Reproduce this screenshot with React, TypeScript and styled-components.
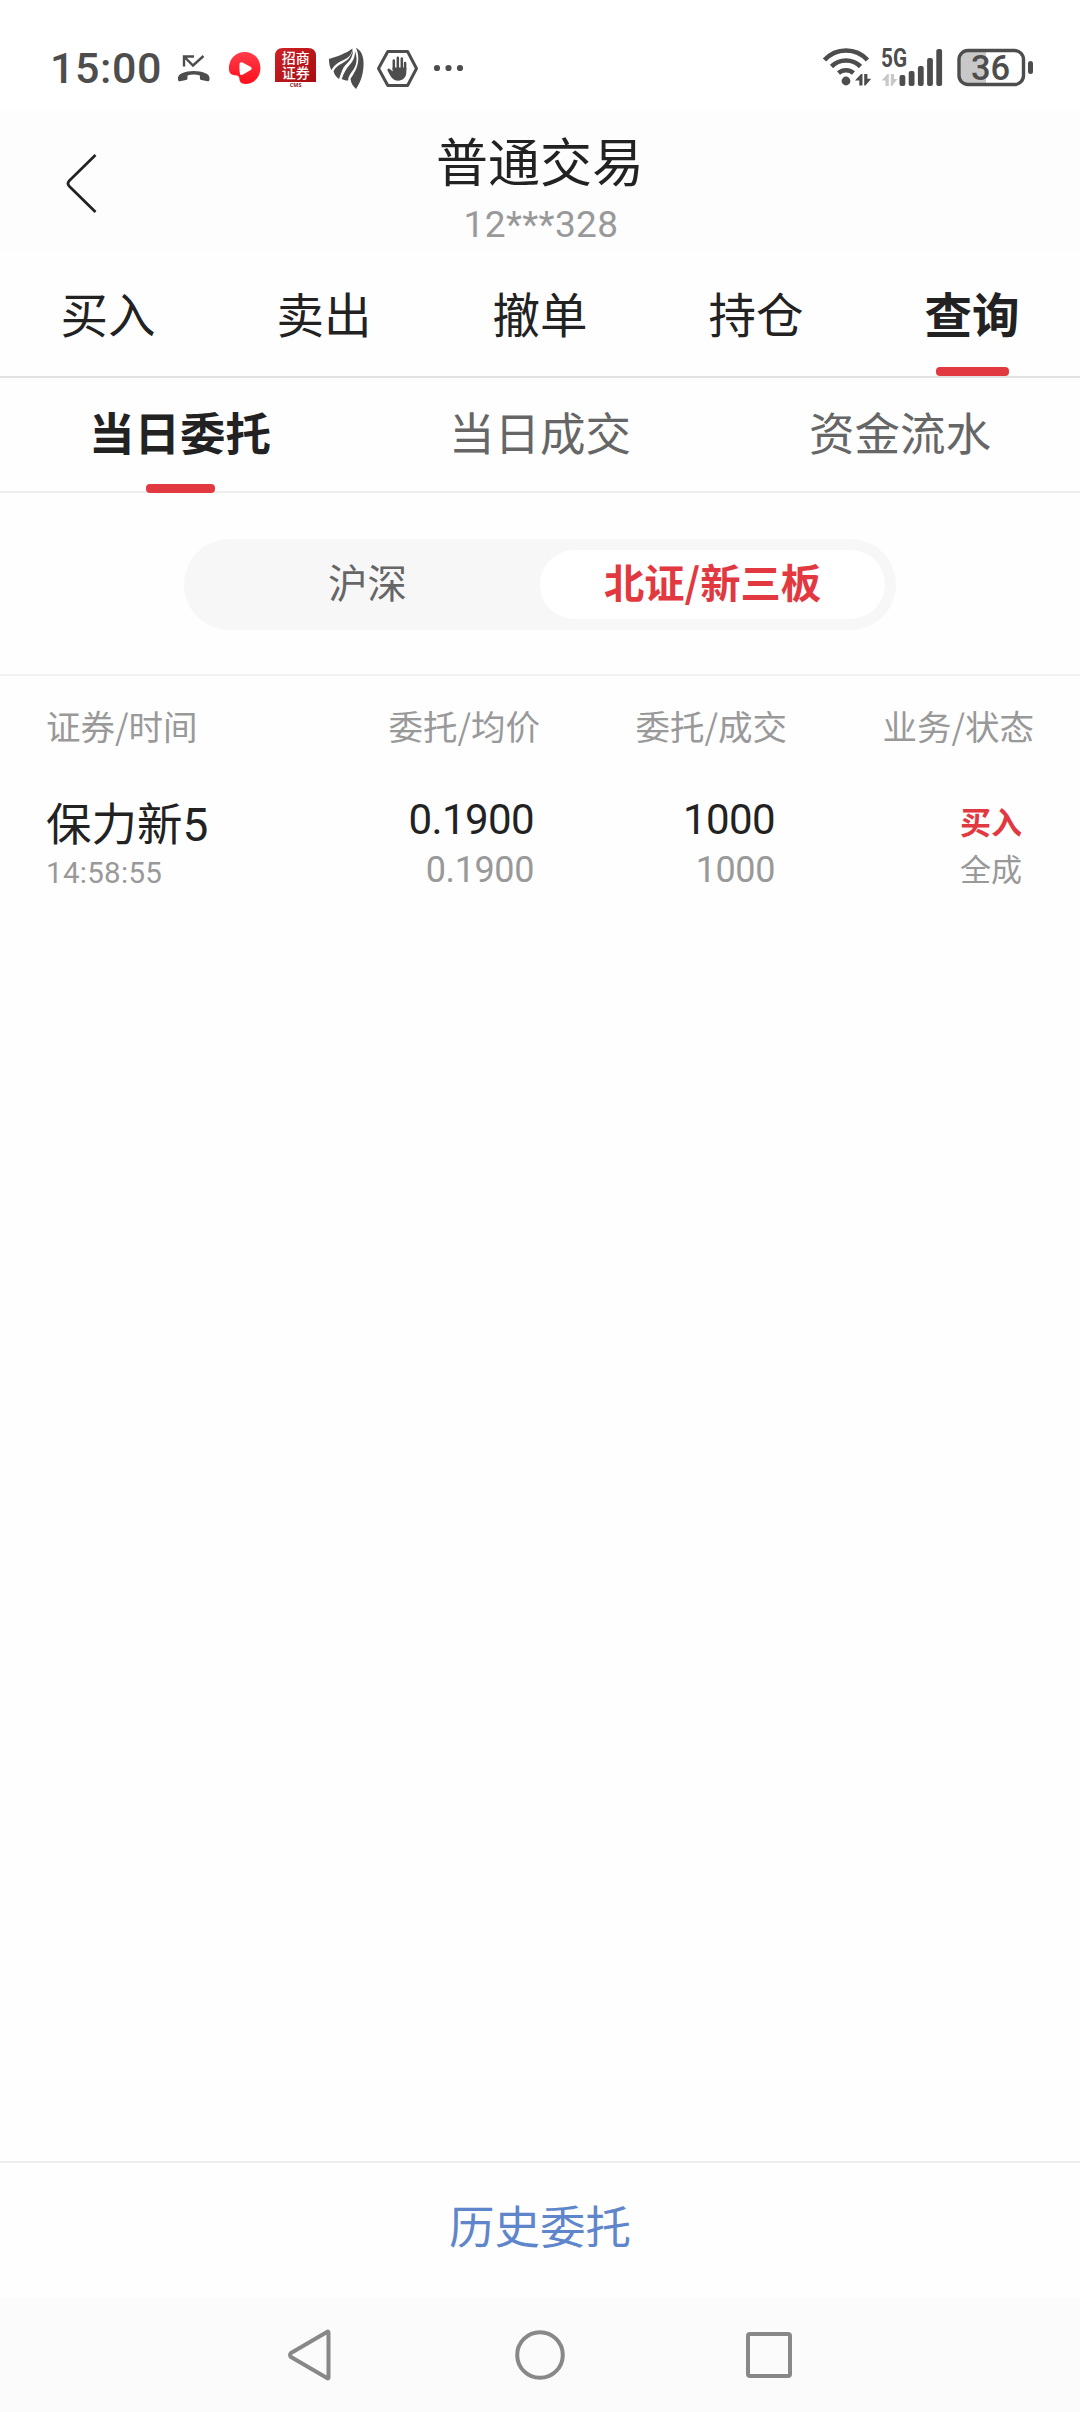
import React from "react";
import styled, { createGlobalStyle } from "styled-components";

const CJK = `"Noto Sans CJK SC", "Noto Sans", sans-serif`;
const NUM = `Roboto, "Noto Sans CJK SC", sans-serif`;
const RED = "#e1393f";
const INK = "#222222";
const MID = "#666666";
const GREY = "#999999";
const STATUS = "#4d4d4d";

const GlobalStyle = createGlobalStyle`
  body { margin: 0; background: #fefefe; }
  * { box-sizing: border-box; }
  button { border: 0; padding: 0; background: none; font: inherit; color: inherit; }
`;

const Screen = styled.div`
  width: 1080px;
  height: 2412px;
  display: flex;
  flex-direction: column;
  background: #fefefe;
  color: ${INK};
  font-family: ${CJK};
  overflow: hidden;
`;

/* ---------- status bar ---------- */
const StatusBar = styled.div`
  height: 110px;
  flex: none;
  display: flex;
  align-items: flex-start;
  justify-content: space-between;
  padding: 44px 45px 0 50px;
  background: #ffffff;
`;
const StatusGroup = styled.div`
  display: flex;
  align-items: center;
  height: 48px;
`;
const Clock = styled.div`
  width: 121px;
  font: 500 43px/48px ${NUM};
  letter-spacing: 0.6px;
  color: ${STATUS};
  white-space: nowrap;
`;
const Icon = styled.svg<{ $gap?: number }>`
  display: block;
  flex: none;
  overflow: visible;
  margin-left: ${(p) => p.$gap ?? 0}px;
`;

/* ---------- title ---------- */
const Header = styled.header`
  height: 142px;
  flex: none;
  display: grid;
  grid-template-columns: 160px 1fr 160px;
  background: #fdfdfd;
`;
const BackButton = styled.button`
  display: flex;
  align-items: flex-start;
  padding: 43px 0 0 64px;
`;
const Titles = styled.div`
  display: flex;
  flex-direction: column;
  align-items: center;
  padding-top: 19px;
`;
const Title = styled.h1`
  margin: 0;
  font-size: 52px;
  font-weight: 400;
  line-height: 62px;
`;
const Account = styled.div`
  margin-top: 14px;
  padding-left: 2px;
  font: 400 37px/40px ${NUM};
  letter-spacing: 0.4px;
  color: ${GREY};
`;

/* ---------- tabs ---------- */
const Tabs = styled.nav<{ $height: number; $line: string }>`
  height: ${(p) => p.$height}px;
  flex: none;
  display: flex;
  border-bottom: 2px solid ${(p) => p.$line};
`;
const Tab = styled.button<{ $size: number; $active?: boolean; $color: string; $top: number }>`
  flex: 1;
  display: flex;
  flex-direction: column;
  align-items: center;
  justify-content: space-between;
  padding-top: ${(p) => p.$top}px;
  font-size: ${(p) => p.$size}px;
  font-weight: ${(p) => (p.$active ? 700 : 400)};
  line-height: 60px;
  color: ${(p) => (p.$active ? INK : p.$color)};
`;
const Indicator = styled.span<{ $width: number; $drop?: number }>`
  width: ${(p) => p.$width}px;
  height: 9px;
  margin-bottom: ${(p) => -(p.$drop ?? 0)}px;
  border-radius: 4px;
  background: ${RED};
`;

/* ---------- market switch ---------- */
const SwitchArea = styled.div`
  height: 183px;
  flex: none;
  display: flex;
  justify-content: center;
  align-items: flex-start;
  padding-top: 46px;
  border-bottom: 2px solid #f1f1f1;
`;
const Segment = styled.div`
  width: 712px;
  height: 91px;
  display: flex;
  padding: 11px;
  border-radius: 46px;
  background: #f7f7f7;
`;
const SegmentItem = styled.button<{ $active?: boolean }>`
  flex: 1;
  height: 69px;
  border-radius: 35px;
  font-size: ${(p) => (p.$active ? 40.3 : 39.5)}px;
  line-height: 60px;
  padding-bottom: 8px;
  font-weight: ${(p) => (p.$active ? 700 : 400)};
  color: ${(p) => (p.$active ? RED : MID)};
  background: ${(p) => (p.$active ? "#ffffff" : "transparent")};
`;

/* ---------- order table ---------- */
const Orders = styled.main`
  flex: 1;
  display: flex;
  flex-direction: column;
  padding: 0 46px;
`;
const Row = styled.div`
  display: grid;
  grid-template-columns: 246px 248px 247px 247px;
`;
const HeadRow = styled(Row)`
  padding-top: 24px;
  font-size: 34.500px;
  line-height: 50px;
  color: ${GREY};
`;
const HeadCell = styled.div<{ $left?: boolean }>`
  text-align: ${(p) => (p.$left ? "left" : "right")};
  white-space: nowrap;
`;
const OrderRow = styled(Row)`
  padding-top: 41px;
`;
const Cell = styled.div<{ $inset?: number; $left?: boolean }>`
  display: flex;
  flex-direction: column;
  align-items: ${(p) => (p.$left ? "flex-start" : "flex-end")};
  padding-right: ${(p) => p.$inset ?? 0}px;
  white-space: nowrap;
`;
const StockName = styled.div`
  font-size: 45.5px;
  line-height: 60px;
`;
const StockDigit = styled.span`
  font-family: ${NUM};
  font-size: 46px;
  line-height: 1;
`;
const Time = styled.div`
  margin-top: 4px;
  font: 400 29.5px/36px ${NUM};
  letter-spacing: 0.3px;
  color: ${GREY};
`;
const Value = styled.div`
  margin-top: 1px;
  font: 400 42px/56px ${NUM};
  letter-spacing: -0.6px;
`;
const SubValue = styled.div`
  margin-top: 2px;
  font: 400 36px/40px ${NUM};
  letter-spacing: -0.4px;
  color: ${GREY};
`;
const Side = styled.div`
  font-size: 31px;
  font-weight: 700;
  line-height: 60px;
  color: ${RED};
`;
const State = styled.div`
  font-size: 31px;
  line-height: 34px;
  color: ${GREY};
`;

/* ---------- footer ---------- */
const HistoryLink = styled.button`
  height: 137px;
  flex: none;
  border-top: 2px solid #eeeeee;
  padding-bottom: 13px;
  font-size: 45.5px;
  line-height: 60px;
  color: #5f86cb;
`;
const SystemNav = styled.nav`
  height: 114px;
  flex: none;
  display: flex;
  justify-content: center;
  gap: 177px;
  padding-top: 30px;
  background: #fbfbfb;
`;

const mainTabs = ["买入", "卖出", "撤单", "持仓", "查询"];
const queryTabs = ["当日委托", "当日成交", "资金流水"];

const MissedCallIcon = () => (
  <Icon $gap={5} width="35" height="32" viewBox="176 52 35 32" fill="none">
    <path d="M184 66.500V56.500H194M184.500 57L193 65.500L203.500 56" stroke={STATUS} strokeWidth="2.400" />
    <path d="M178 79.500c-.5-3 1-5 4-6.300c6.500-2.900 17-2.900 23.500 0c3 1.300 4.500 3.300 4 6.300c-.1 1.500-.9 1.900-2 1.700l-6-1.100c-1.200-.2-1.600-.8-1.600-2v-2.600c-4-1.200-8.400-1.200-12.400 0v2.600c0 1.200-.4 1.800-1.600 2l-6 1.100c-1.100.2-1.800-.2-1.900-1.700z" fill={STATUS} />
  </Icon>
);
const VideoIcon = () => (
  <Icon $gap={17} width="34" height="36" viewBox="228 50 34 36">
    <defs>
      <linearGradient id="video" x1="0" y1="0" x2="0" y2="1">
        <stop offset="0" stopColor="#ff3d4a" />
        <stop offset="1" stopColor="#ff0d1b" />
      </linearGradient>
    </defs>
    <path d="M244.800 52C254 52 260.400 59 260.400 68C260.400 77 254 84 245.500 84C241.500 84 239.500 82 239.400 78.800C239.300 75.800 237.500 75.500 234.500 75.300C230.500 75 228.800 72.500 228.900 68C229.100 59 235.500 52 244.800 52Z" fill="url(#video)" />
    <path d="M239.500 64c.2-1.600 1.600-2.300 3-1.600l8 4.300c1.500 1 1.500 2.600.2 3.400l-7.600 4.500c-1.700 1-3 .4-3.200-1.200c-.5-3.200-.7-6.200-.4-9.400z" fill="#fff" />
  </Icon>
);
const BrokerIcon = () => (
  <Icon $gap={13} width="42" height="42" viewBox="275 47 42 42">
    <defs>
      <linearGradient id="broker" x1="0" y1="0" x2="1" y2="1">
        <stop offset="0" stopColor="#d02125" />
        <stop offset="1" stopColor="#a50d12" />
      </linearGradient>
    </defs>
    <path d="M283 48H308Q316 48 316 56V82H275V56Q275 48 283 48Z" fill="url(#broker)" />
    <text x="295.700" y="62.800" fontSize="14" fontWeight="500" fontFamily={CJK} fill="#fff" textAnchor="middle">招商</text>
    <text x="295.700" y="77.800" fontSize="14" fontWeight="500" fontFamily={CJK} fill="#fff" textAnchor="middle">证券</text>
    <text x="295.700" y="87.400" fontSize="5.500" fontWeight="700" fontFamily="Open Sans, sans-serif" fill="#8e2023" textAnchor="middle">CMS</text>
  </Icon>
);
const WingIcon = () => (
  <Icon $gap={11} width="38" height="44" viewBox="328 46 38 44" fill={STATUS}>
    <path d="M329 59C337 56.500 346 53.500 352.500 48.500C352 54 349 57.500 343.500 60C337.500 62.700 334.500 65 331.500 70C329.500 67 329 63 329 59Z" />
    <path d="M354 49.500C354 57 351 60.500 347 64.500C343 68.500 342.500 73 340 79C337.500 77.500 335.200 74.500 334.500 71C338.500 63.500 347.500 63 351 56.500C352.500 54 353.500 52 354 49.500Z" transform="translate(-1 0)" />
    <path d="M356 47.800C361.500 50.500 364 57 363.500 66C363 76 360 83 356 89C353 86 350.800 83 350.500 79C355 72 362 62 356 47.800Z" />
    <path d="M355 51C358 60 356.500 66 352 71.500C349.500 75 348 77.500 348.200 80.500C345.800 80.700 343.200 79.800 341.800 79C343.500 73 346.500 68.500 350 64.500C353.500 60.500 355 57 355 51Z" />
  </Icon>
);
const BlockIcon = () => (
  <Icon $gap={10} width="43" height="42" viewBox="376 47 43 42">
    <path d="M387.800 51.500H407.600L416.500 68.500L407.600 85.500H387.800L378.500 68.500Z" fill="none" stroke={STATUS} strokeWidth="3" strokeLinejoin="round" />
    <path d="M393.800 69V60.500M397.800 69V57.700M401.800 69V58.500M405.100 70V63" stroke={STATUS} strokeWidth="2.500" strokeLinecap="round" />
    <path d="M392.600 67.500H406.300V72.500C406.300 77.500 402.500 80.700 398 80.700C393 80.700 390.500 76.500 387.600 70.700C386.900 68.900 388.600 67.700 390 69L392.600 71.500Z" fill={STATUS} />
  </Icon>
);
const MoreIcon = () => (
  <Icon $gap={14} width="32" height="10" viewBox="433 62 32 10" fill={STATUS}>
    <circle cx="437" cy="67" r="3.100" />
    <circle cx="448.500" cy="67" r="3.100" />
    <circle cx="460" cy="67" r="3.100" />
  </Icon>
);
const WifiIcon = () => (
  <Icon width="50" height="42" viewBox="822 47 50 42" fill="none">
    <path d="M824.500 60A29 29 0 0 1 867.500 60M831.500 66.500A20.500 20.500 0 0 1 860.500 66.500M838.500 73A11.500 11.500 0 0 1 853.500 73" stroke={STATUS} strokeWidth="4.600" />
    <circle cx="846" cy="81" r="4.400" fill={STATUS} />
    <path d="M862.500 74V85.500H859.300V80.500H855L861 74ZM864.200 85.500V74H867.400V78.800H871.200L865.500 85.500Z" fill={STATUS} />
  </Icon>
);
const SignalIcon = () => (
  <Icon $gap={8} width="64" height="42" viewBox="880 47 64 42">
    <text x="881" y="66.800" fontFamily={NUM} fontSize="25" fontWeight="700" fill={STATUS} textLength="26" lengthAdjust="spacingAndGlyphs">5G</text>
    <path d="M888.800 74V86H885.500V80.500H881.500L887.500 74ZM890.800 86V74H894V79H897.500L892 86Z" fill="#c8c8c8" />
    {[75, 71, 66, 58, 49].map((y, i) => (
      <rect key={y} x={899.5 + i * 9.2} y={y} width="5.800" height={86 - y} rx="2" fill={STATUS} />
    ))}
  </Icon>
);
const BatteryIcon = () => (
  <Icon $gap={12} width="79" height="42" viewBox="956 47 79 42">
    <clipPath id="charge"><rect x="957" y="49" width="29" height="37" /></clipPath>
    <rect x="959" y="50.500" width="64.500" height="34" rx="9" fill="#c8c8c8" clipPath="url(#charge)" />
    <rect x="959" y="50.500" width="64.500" height="34" rx="9" fill="none" stroke={STATUS} strokeWidth="3.400" />
    <rect x="1028" y="61" width="5" height="13" rx="2.500" fill={STATUS} />
    <text x="990.500" y="79.500" textAnchor="middle" fontFamily={NUM} fontWeight="500" fontSize="34.500" fill={STATUS}>36</text>
  </Icon>
);

export default function App() {
  return (
    <>
      <GlobalStyle />
      <Screen>
        <StatusBar>
          <StatusGroup>
            <Clock>15:00</Clock>
            <MissedCallIcon />
            <VideoIcon />
            <BrokerIcon />
            <WingIcon />
            <BlockIcon />
            <MoreIcon />
          </StatusGroup>
          <StatusGroup>
            <WifiIcon />
            <SignalIcon />
            <BatteryIcon />
          </StatusGroup>
        </StatusBar>

        <Header>
          <BackButton aria-label="返回">
            <Icon width="34" height="62" viewBox="0 0 34 62" fill="none">
              <path d="M31.500 2L5.500 27.500Q2.500 30.500 5.500 33.500L31.500 59" stroke={INK} strokeWidth="2.700" />
            </Icon>
          </BackButton>
          <Titles>
            <Title>普通交易</Title>
            <Account>12***328</Account>
          </Titles>
        </Header>

        <Tabs $height={126} $line="#e2e2e2">
          {mainTabs.map((t, i) => (
            <Tab key={t} $size={47.5} $top={31} $color={INK} $active={i === 4}>
              {t}
              {i === 4 && <Indicator $width={73} />}
            </Tab>
          ))}
        </Tabs>
        <Tabs $height={115} $line="#eeeeee">
          {queryTabs.map((t, i) => (
            <Tab key={t} $size={45.5} $top={23} $color={MID} $active={i === 0}>
              {t}
              {i === 0 && <Indicator $width={69} $drop={2} />}
            </Tab>
          ))}
        </Tabs>

        <SwitchArea>
          <Segment>
            <SegmentItem>沪深</SegmentItem>
            <SegmentItem $active>北证/新三板</SegmentItem>
          </Segment>
        </SwitchArea>

        <Orders>
          <HeadRow>
            <HeadCell $left>证券/时间</HeadCell>
            <HeadCell>委托/均价</HeadCell>
            <HeadCell>委托/成交</HeadCell>
            <HeadCell>业务/状态</HeadCell>
          </HeadRow>
          <OrderRow>
            <Cell $left>
              <StockName>保力新<StockDigit>5</StockDigit></StockName>
              <Time>14:58:55</Time>
            </Cell>
            <Cell $inset={6}>
              <Value>0.1900</Value>
              <SubValue>0.1900</SubValue>
            </Cell>
            <Cell $inset={12}>
              <Value>1000</Value>
              <SubValue>1000</SubValue>
            </Cell>
            <Cell $inset={12}>
              <Side>买入</Side>
              <State>全成</State>
            </Cell>
          </OrderRow>
        </Orders>

        <HistoryLink>历史委托</HistoryLink>
        <SystemNav>
          <Icon width="50" height="54" viewBox="0 0 50 54" fill="none">
            <path d="M42.500 4.500V49.500Q42.500 51 41 50L5 29Q3 27 5 25L41 4Q42.500 3 42.500 4.500Z" stroke="#888" strokeWidth="4" strokeLinejoin="round" />
          </Icon>
          <Icon width="54" height="54" viewBox="0 0 54 54" fill="none">
            <circle cx="27" cy="27" r="22.800" stroke="#888" strokeWidth="4" />
          </Icon>
          <Icon width="50" height="54" viewBox="0 0 50 54" fill="none">
            <rect x="4" y="6" width="42" height="42" rx="2" stroke="#888" strokeWidth="4" />
          </Icon>
        </SystemNav>
      </Screen>
    </>
  );
}
